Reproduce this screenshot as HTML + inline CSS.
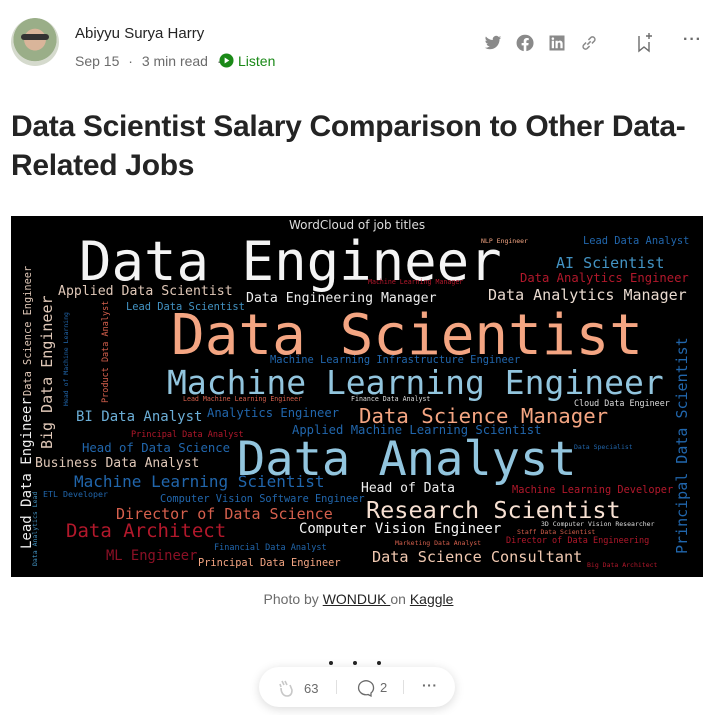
<!DOCTYPE html>
<html><head><meta charset="utf-8"><style>
body{margin:0;background:#fff;width:717px;height:715px;overflow:hidden;position:relative;font-family:"Liberation Sans",sans-serif;color:#242424}
.a{position:absolute}
#wc{position:absolute;left:11px;top:216px;width:692px;height:361px;background:#000;overflow:hidden}
#wc span{position:absolute;font-family:"DejaVu Sans Mono",monospace;white-space:nowrap;line-height:1}
.v{transform:rotate(-90deg);transform-origin:left top}
.ic{position:absolute;fill:#8a8a8a}
</style></head><body>
<div class="a" style="left:11px;top:18px;width:48px;height:48px;border-radius:50%;background:radial-gradient(circle at 50% 45%,#d9b59a 0 30%,#9aae88 31% 60%,#d5dacd 61%);"></div>
<div class="a" style="left:21px;top:34px;width:28px;height:6px;background:#333;border-radius:3px"></div>
<div class="a" style="left:75px;top:25px;font-size:15px;color:#242424">Abiyyu Surya Harry</div>
<div class="a" style="left:75px;top:53px;font-size:14px;color:#6b6b6b">Sep 15 <span style="margin:0 5px">·</span> 3 min read <span style="margin:0 5px">·</span></div>
<svg class="a" style="left:219px;top:53px" width="15" height="15" viewBox="0 0 16 16"><circle cx="8" cy="8" r="7.5" fill="#1a8917"/><path d="M6 4.8v6.4L11 8z" fill="#fff"/></svg>
<div class="a" style="left:238px;top:53px;font-size:14px;color:#1a8917">Listen</div>
<svg class="ic" style="left:484px;top:34px" width="18" height="18" viewBox="0 0 24 24"><path d="M23 4.6a9 9 0 0 1-2.6.7 4.6 4.6 0 0 0 2-2.5 9 9 0 0 1-2.9 1.1A4.5 4.5 0 0 0 11.8 8 12.8 12.8 0 0 1 2.5 3.3a4.5 4.5 0 0 0 1.4 6 4.5 4.5 0 0 1-2-.6 4.5 4.5 0 0 0 3.6 4.5 4.5 4.5 0 0 1-2 .1 4.5 4.5 0 0 0 4.2 3.1A9 9 0 0 1 1 18.3 12.8 12.8 0 0 0 7.9 20.3c8.3 0 12.8-6.9 12.8-12.8v-.6A9 9 0 0 0 23 4.6z"/></svg>
<svg class="ic" style="left:516px;top:34px" width="18" height="18" viewBox="0 0 24 24"><path d="M12 1a11 11 0 0 0-1.7 21.9v-7.7H7.5V12h2.8V9.6c0-2.8 1.6-4.3 4.2-4.3 1.2 0 2.5.2 2.5.2v2.7h-1.4c-1.4 0-1.8.9-1.8 1.7V12h3.1l-.5 3.2h-2.6v7.7A11 11 0 0 0 12 1z"/></svg>
<svg class="ic" style="left:548px;top:34px" width="18" height="18" viewBox="0 0 24 24"><path d="M2 2h20v20H2zM5 9v10h3V9zm1.5-4.5a1.7 1.7 0 1 0 0 3.4 1.7 1.7 0 0 0 0-3.4zM10 9v10h3v-5.3c0-1.4.6-2.3 1.8-2.3s1.7.9 1.7 2.3V19h3v-6c0-2.8-1.5-4.2-3.6-4.2-1.5 0-2.5.8-2.9 1.5V9z" fill-rule="evenodd"/></svg>
<svg class="a" style="left:579px;top:33px" width="20" height="20" viewBox="0 0 24 24" fill="none" stroke="#8a8a8a" stroke-width="1.8"><path d="M10 14l4-4M8.5 11.5l-3 3a3 3 0 0 0 4.2 4.2l3-3M15.5 12.5l3-3a3 3 0 0 0-4.2-4.2l-3 3"/></svg>
<svg class="a" style="left:636px;top:31px" width="20" height="22" viewBox="0 0 20 22" fill="none" stroke="#6b6b6b" stroke-width="1.4"><path d="M3 5v15l5-4 5 4V11M13 2v6M10 5h6"/></svg>
<div class="a" style="left:683px;top:31px;font-size:16px;color:#6b6b6b;font-weight:bold;letter-spacing:1px">···</div>
<div class="a" style="left:11px;top:107px;font-size:30px;font-weight:bold;line-height:39px;letter-spacing:-0.3px;color:#242424;white-space:nowrap">Data Scientist Salary Comparison to Other Data-<br>Related Jobs</div>
<div id="wc">
<span style="left:278px;top:3px;font-family:'DejaVu Sans',sans-serif;font-size:12px;color:#ddd">WordCloud of job titles</span>
<span style="left:68px;top:19px;font-size:54px;color:#f4f4f4">Data Engineer</span>
<span style="left:160px;top:92px;font-size:56px;color:#f4a582">Data Scientist</span>
<span style="left:156px;top:150px;font-size:33px;color:#92c5de">Machine Learning Engineer</span>
<span style="left:226px;top:220px;font-size:47px;color:#92c5de">Data Analyst</span>
<span style="left:47px;top:69px;font-size:13.2px;color:#e0c8b8">Applied Data Scientist</span>
<span style="left:235px;top:76px;font-size:13.2px;color:#eee">Data Engineering Manager</span>
<span style="left:115px;top:86px;font-size:10.4px;color:#4393c3">Lead Data Scientist</span>
<span style="left:572px;top:20px;font-size:10.4px;color:#2166ac">Lead Data Analyst</span>
<span style="left:470px;top:22px;font-size:6.5px;color:#f4a582">NLP Engineer</span>
<span style="left:545px;top:40px;font-size:15px;color:#4393c3">AI Scientist</span>
<span style="left:509px;top:56px;font-size:12.2px;color:#b2182b">Data Analytics Engineer</span>
<span style="left:357px;top:63px;font-size:6.6px;color:#b2182b">Machine Learning Manager</span>
<span style="left:477px;top:72px;font-size:15px;color:#eadbd0">Data Analytics Manager</span>
<span style="left:259px;top:139px;font-size:10.4px;color:#2166ac">Machine Learning Infrastructure Engineer</span>
<span style="left:172px;top:180px;font-size:6.6px;color:#d6604d">Lead Machine Learning Engineer</span>
<span style="left:340px;top:180px;font-size:6.6px;color:#ddd">Finance Data Analyst</span>
<span style="left:563px;top:183px;font-size:8.4px;color:#ddd">Cloud Data Engineer</span>
<span style="left:65px;top:194px;font-size:14px;color:#6baed6">BI Data Analyst</span>
<span style="left:196px;top:191px;font-size:12.2px;color:#2166ac">Analytics Engineer</span>
<span style="left:348px;top:190px;font-size:20.7px;color:#f4a582">Data Science Manager</span>
<span style="left:281px;top:208px;font-size:12.2px;color:#2166ac">Applied Machine Learning Scientist</span>
<span style="left:120px;top:215px;font-size:8.5px;color:#b2182b">Principal Data Analyst</span>
<span style="left:71px;top:226px;font-size:12.3px;color:#2166ac">Head of Data Science</span>
<span style="left:563px;top:228px;font-size:6.5px;color:#2166ac">Data Specialist</span>
<span style="left:24px;top:241px;font-size:13px;color:#e0c8b8">Business Data Analyst</span>
<span style="left:350px;top:266px;font-size:13px;color:#eee">Head of Data</span>
<span style="left:501px;top:269px;font-size:10.3px;color:#b2182b">Machine Learning Developer</span>
<span style="left:63px;top:258px;font-size:16px;color:#2166ac">Machine Learning Scientist</span>
<span style="left:32px;top:274px;font-size:8.3px;color:#2166ac">ETL Developer</span>
<span style="left:149px;top:278px;font-size:10.3px;color:#2166ac">Computer Vision Software Engineer</span>
<span style="left:355px;top:283px;font-size:23.5px;color:#f7e0d2">Research Scientist</span>
<span style="left:105px;top:291px;font-size:15px;color:#d6604d">Director of Data Science</span>
<span style="left:530px;top:305px;font-size:6.5px;color:#ddd">3D Computer Vision Researcher</span>
<span style="left:55px;top:306px;font-size:19px;color:#b2182b">Data Architect</span>
<span style="left:288px;top:306px;font-size:14px;color:#f4f4f4">Computer Vision Engineer</span>
<span style="left:506px;top:313px;font-size:6.5px;color:#d6604d">Staff Data Scientist</span>
<span style="left:384px;top:324px;font-size:6.5px;color:#d6604d">Marketing Data Analyst</span>
<span style="left:495px;top:321px;font-size:8.5px;color:#b2182b">Director of Data Engineering</span>
<span style="left:203px;top:328px;font-size:8.5px;color:#2166ac">Financial Data Analyst</span>
<span style="left:95px;top:334px;font-size:13.8px;color:#8b1025">ML Engineer</span>
<span style="left:187px;top:342px;font-size:10.3px;color:#f4a582">Principal Data Engineer</span>
<span style="left:361px;top:334px;font-size:15.2px;color:#f0c8b0">Data Science Consultant</span>
<span style="left:576px;top:346px;font-size:6.5px;color:#b2182b">Big Data Architect</span>
<span class="v" style="left:664px;top:338px;font-size:15px;color:#2166ac">Principal Data Scientist</span>
<span class="v" style="left:9px;top:333px;font-size:14px;color:#eee">Lead Data Engineer</span>
<span class="v" style="left:12px;top:180px;font-size:10.3px;color:#e0c8b8">Data Science Engineer</span>
<span class="v" style="left:29px;top:233px;font-size:15px;color:#e0c8b8">Big Data Engineer</span>
<span class="v" style="left:52px;top:190px;font-size:6.5px;color:#2166ac">Head of Machine Learning</span>
<span class="v" style="left:91px;top:187px;font-size:8.5px;color:#d6604d">Product Data Analyst</span>
<span class="v" style="left:21px;top:350px;font-size:6.5px;color:#4393c3">Data Analytics Lead</span>
</div>
<div class="a" style="left:0;width:717px;top:591px;text-align:center;font-size:14px;color:#6b6b6b">Photo by <u style="color:#242424">WONDUK </u>on <u style="color:#242424">Kaggle</u></div>
<div class="a" style="left:329px;top:661px;width:4px;height:4px;border-radius:50%;background:#242424"></div>
<div class="a" style="left:353px;top:661px;width:4px;height:4px;border-radius:50%;background:#242424"></div>
<div class="a" style="left:377px;top:661px;width:4px;height:4px;border-radius:50%;background:#242424"></div>
<div class="a" style="left:259px;top:667px;width:196px;height:40px;border-radius:20px;background:#fff;box-shadow:0 2px 10px rgba(0,0,0,.15)"></div>
<svg class="a" style="left:276px;top:678px" width="20" height="20" viewBox="0 0 20 20" fill="none" stroke="#c8c8c8" stroke-width="1.6"><path d="M5 9l-1-3M8 7L6 3M11 7L9 3M5 10c0 4 2 8 6 8s5-3 5-6l-2-5"/></svg>
<div class="a" style="left:304px;top:681px;font-size:13px;color:#6b6b6b">63</div>
<div class="a" style="left:336px;top:680px;width:1px;height:14px;background:#e0e0e0"></div>
<svg class="a" style="left:355px;top:678px" width="20" height="20" viewBox="0 0 20 20" fill="none" stroke="#6b6b6b" stroke-width="1.3"><path d="M16 15a7.5 7 0 1 0-3 1.5L16 18z"/></svg>
<div class="a" style="left:380px;top:680px;font-size:13px;color:#6b6b6b">2</div>
<div class="a" style="left:403px;top:680px;width:1px;height:14px;background:#e0e0e0"></div>
<div class="a" style="left:422px;top:677px;font-size:14px;font-weight:bold;color:#6b6b6b;letter-spacing:0.5px">···</div>
</body></html>
